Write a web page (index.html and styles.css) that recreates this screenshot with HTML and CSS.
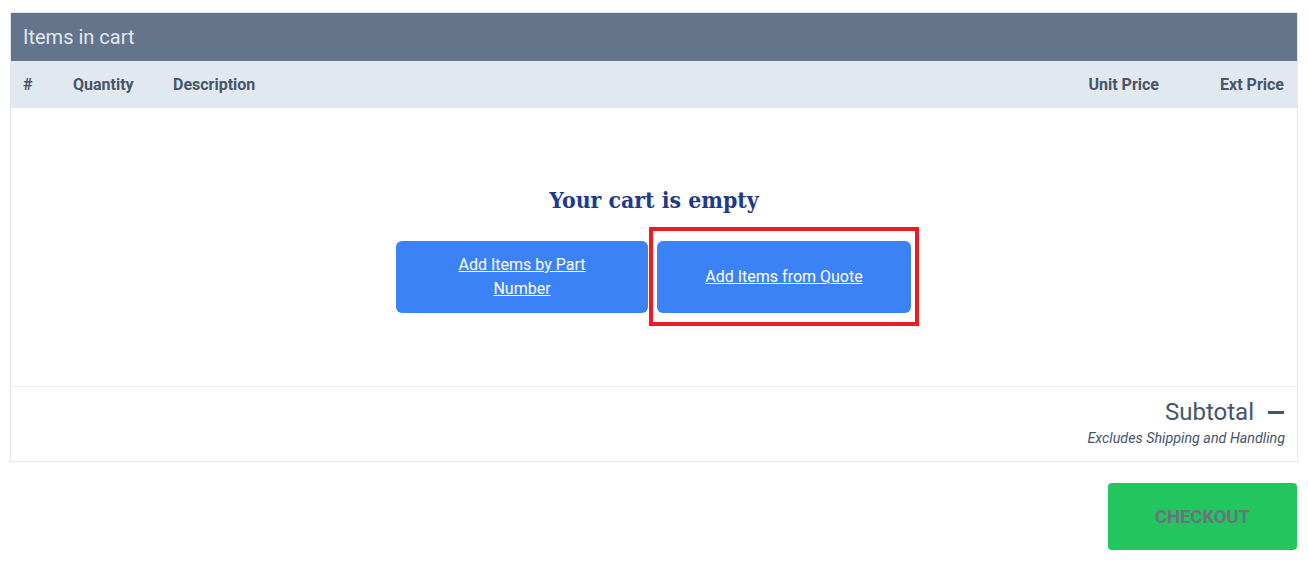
FILE: index.html
```html
<!DOCTYPE html>
<html>
<head>
<meta charset="utf-8">
<link rel="stylesheet" href="styles.css">
</head>
<body>
<div class="page">
  <section class="cart">
    <div class="cart-title">Items in cart</div>
    <div class="cols">
      <div class="col c-num">#</div>
      <div class="col c-qty">Quantity</div>
      <div class="col c-desc">Description</div>
      <div class="col c-unit">Unit Price</div>
      <div class="col c-ext">Ext Price</div>
    </div>
    <div class="empty">
      <h2 class="empty-title">Your cart is empty</h2>
      <div class="actions">
        <a class="btn btn-part" href="#">Add Items by Part Number</a>
        <a class="btn btn-quote highlighted" href="#">Add Items from Quote</a>
      </div>
    </div>
    <div class="subtotal">
      <div class="sub-line"><span class="sub-label">Subtotal</span><span class="dash"></span></div>
      <div class="sub-note">Excludes Shipping and Handling</div>
    </div>
  </section>
  <div class="checkout-row">
    <button class="checkout">CHECKOUT</button>
  </div>
</div>
</body>
</html>
```
FILE: styles.css
```css
* { box-sizing: border-box; }
html, body { margin: 0; padding: 0; background: #fff; }
body { font-family: Roboto, "Liberation Sans", sans-serif; color: #475569; }
.page { padding: 12px 10px 0 10px; }
.cart { border: 1px solid #e5e7eb; }
.cart-title {
  background: #64748b;
  color: #e2e8f0;
  font-size: 20px;
  height: 48px;
  line-height: 49px;
  padding: 0 12px;
}
.cols {
  display: grid;
  grid-template-columns: 50px 100px 1fr 150px 126px;
  background: #e2e8f0;
  height: 47px;
  align-items: center;
  font-weight: 700;
  font-size: 16px;
  color: #475569;
}
.col { padding: 0 12px; }
.c-unit, .c-ext { text-align: right; }
.c-ext { padding-right: 13px; }
.empty {
  padding: 76px 0 73px;
  display: flex;
  flex-direction: column;
  align-items: center;
}
.empty-title {
  margin: 0 0 25px;
  font-family: "DejaVu Serif", "Liberation Serif", serif;
  font-stretch: condensed;
  font-weight: 700;
  font-size: 22.8px;
  line-height: 32px;
  color: #1e3a8a;
}
.actions { display: flex; gap: 9px; margin-left: -1px; }
.btn {
  position: relative;
  min-height: 72px;
  padding: 12px 40px;
  background: #3b82f6;
  border-radius: 6px;
  color: #fff;
  font-size: 16px;
  line-height: 24px;
  text-align: center;
  text-decoration: underline;
  display: flex;
  align-items: center;
  justify-content: center;
}
.btn-part { width: 252px; }
.btn-quote { width: 254px; }
.highlighted::after {
  content: "";
  position: absolute;
  left: -8px;
  right: -8px;
  top: -14px;
  bottom: -13px;
  border: 4px solid #ed1c24;
}
.subtotal {
  border-top: 1px solid #e9ecf1;
  padding: 10px 12px 13px;
  text-align: right;
}
.sub-line { display: flex; justify-content: flex-end; align-items: center; gap: 14px; }
.sub-label { font-size: 24px; line-height: 31px; color: #475569; }
.dash { width: 16px; height: 3px; background: #475569; margin-right: 1px; }
.sub-note { font-size: 14.3px; font-style: italic; line-height: 20px; color: #475569; }
.checkout-row { display: flex; justify-content: flex-end; margin-top: 21px; padding-right: 1px; }
.checkout {
  width: 189px;
  height: 67px;
  border: 0;
  border-radius: 4px;
  background: #22c55e;
  color: #6b7280;
  font-family: Roboto, "Liberation Sans", sans-serif;
  font-weight: 700;
  font-size: 18.4px;
}
```
